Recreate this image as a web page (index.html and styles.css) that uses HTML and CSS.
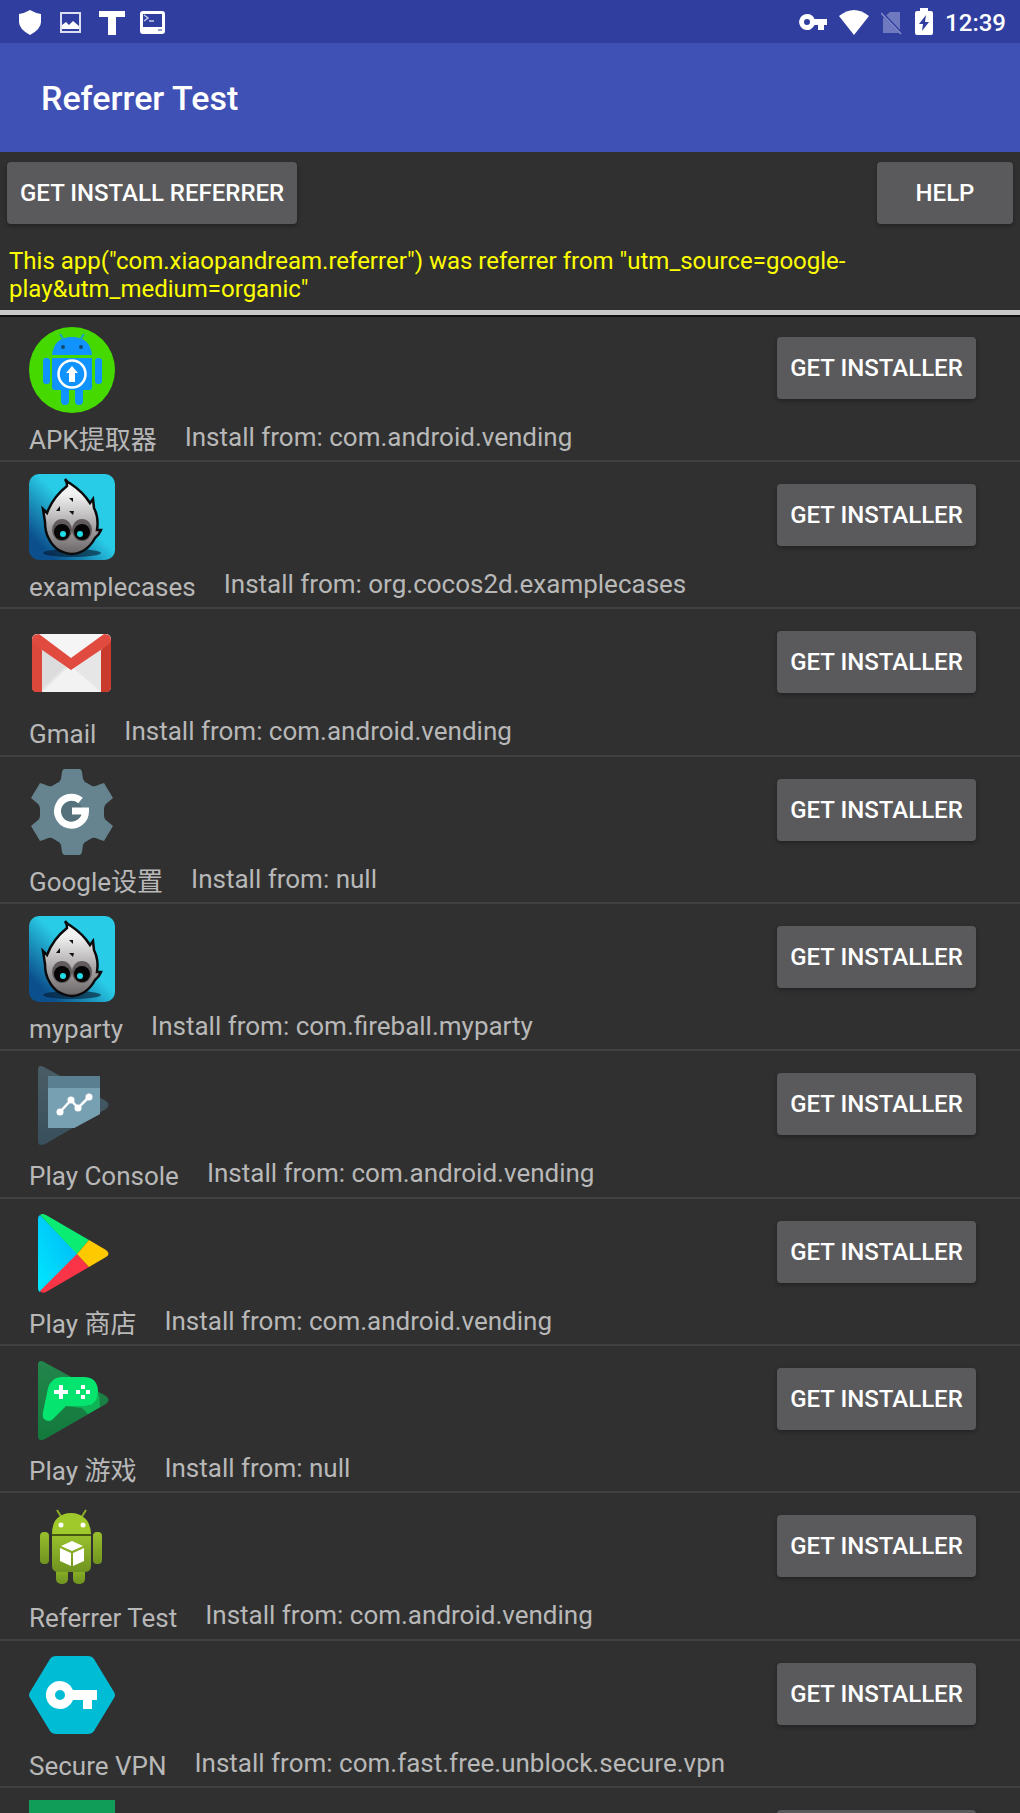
FILE: index.html
```html
<!DOCTYPE html>
<html lang="en">
<head>
<meta charset="utf-8">
<meta name="viewport" content="width=device-width, initial-scale=1">
<title>Referrer Test</title>
<link rel="stylesheet" href="styles.css">
</head>
<body>
<svg class="defs" aria-hidden="true">
  <defs>
    <linearGradient id="sky" x1="1" y1="0" x2="0" y2="1"><stop offset=".45" stop-color="#29cce6"/><stop offset=".85" stop-color="#0b4f8c"/></linearGradient>
    <linearGradient id="fur" x1="0" y1="0" x2="0" y2="1"><stop offset=".2" stop-color="#f2f2f2"/><stop offset="1" stop-color="#6a6465"/></linearGradient>
    <linearGradient id="slate" x1="0" y1="0" x2="0" y2="1"><stop offset="0" stop-color="#4a5c66"/><stop offset="1" stop-color="#38505c"/></linearGradient>
    <linearGradient id="leaf" x1="0" y1="0" x2="0" y2="1"><stop offset="0" stop-color="#23854b"/><stop offset="1" stop-color="#12793c"/></linearGradient>
    <linearGradient id="cyan" x1="1" y1="0" x2="0" y2="1"><stop offset="0" stop-color="#00b4f5"/><stop offset="1" stop-color="#00e8ff"/></linearGradient>
    <linearGradient id="droid" x1="0" y1="0" x2="0" y2="1"><stop offset="0" stop-color="#98c02c"/><stop offset="1" stop-color="#6f9320"/></linearGradient>
    <clipPath id="console-clip"><path d="M0 0H86V43L12 83H0Z"/></clipPath>
    <symbol id="cocos" viewBox="0 0 86 86">
      <rect width="86" height="86" rx="10" fill="url(#sky)"/>
      <ellipse cx="43" cy="79" rx="29" ry="4" fill="#06182b" opacity=".6"/>
      <path d="M36 5Q39 9 42 10Q54 18 61 29L64 25L65 34Q70 44 68 56L72 56Q70 61 66 64Q58 79 43 80Q27 79 20 65Q16 58 16 48L14 35L18 39Q24 23 38 12Q38 8 36 5Z" fill="url(#fur)" stroke="#0b0b0d" stroke-width="2.500"/>
      <path d="M40 24l4 0 0 4zM31 32l0 5-4 0zM40 37l5 0-1 4z" fill="#111"/>
      <ellipse cx="33" cy="56" rx="10" ry="11" fill="#3f3739" opacity=".7"/><ellipse cx="53" cy="56" rx="10" ry="11" fill="#3f3739" opacity=".7"/>
      <ellipse cx="33" cy="58" rx="8" ry="8" fill="#050505"/><ellipse cx="53" cy="58" rx="8" ry="8" fill="#050505"/>
      <circle cx="34" cy="60" r="3" fill="#1fdde8"/><circle cx="51" cy="60" r="3" fill="#1fdde8"/>
    </symbol>
  </defs>
</svg>

<header>
  <div class="status">
    <div class="status-group notices">
      <svg class="glyph" viewBox="0 0 26 26"><path d="M13 1Q18 4 24 5V13Q24 20 13 26Q2 20 2 13V5Q8 4 13 1Z" fill="#fff"/></svg>
      <svg class="glyph" viewBox="0 0 26 26"><rect x="3" y="4" width="19" height="19" fill="none" stroke="#dcdff2" stroke-width="2"/><path d="M4 20V16L8 13L11 16L15 12L21 17V20Z" fill="#fff"/></svg>
      <svg class="glyph" viewBox="0 0 26 26"><path d="M0 2H26V8H17V26H9V8H0Z" fill="#fff"/></svg>
      <svg class="glyph" viewBox="0 0 26 26"><rect x="0" y="2" width="25" height="23" rx="3" fill="#fff"/><rect x="3" y="5" width="19" height="13" fill="#303f9f"/><path d="M4 6l4 3-4 3M9 12h5" fill="none" stroke="#c5caec" stroke-width="1.500"/><path d="M18 21h4" stroke="#303f9f"/></svg>
    </div>
    <div class="status-group system">
      <svg class="key" viewBox="0 0 28 20"><path fill="#fff" fill-rule="evenodd" d="M8 2a8 8 0 0 1 7.500 5H28V13H25V18H19V13H15.500A8 8 0 1 1 8 2ZM8 7a3 3 0 1 0 0 6a3 3 0 1 0 0-6Z"/></svg>
      <svg class="wifi" viewBox="0 0 30 26"><path d="M0 7Q15-5 30 7L15 26Z" fill="#fff"/></svg>
      <svg class="sim" viewBox="0 0 22 26"><path d="M9 3H19V24H2V9Z" fill="#6e79bf"/><path d="M0 3L21 25" stroke="#303f9f" stroke-width="3"/><path d="M0 4L20 25" stroke="#8790ca" stroke-width="1.500"/></svg>
      <svg class="battery" viewBox="0 0 18 27"><path d="M5 0H13V3H16Q18 3 18 5V25Q18 27 16 27H2Q0 27 0 25V5Q0 3 2 3H5Z" fill="#fff"/><path d="M11 7L4 16H8L7 23L14 14H10Z" fill="#303f9f"/></svg>
      <time>12:39</time>
    </div>
  </div>
  <div class="appbar"><h1>Referrer Test</h1></div>
</header>

<main>
  <section class="referrer">
    <div class="actions">
      <button type="button" class="btn btn-referrer">GET INSTALL REFERRER</button>
      <button type="button" class="btn btn-help">HELP</button>
    </div>
    <p class="result">This app("com.xiaopandream.referrer") was referrer from "utm_source=google-play&amp;utm_medium=organic"</p>
  </section>

  <ul class="apps">
    <li class="app">
      <div class="info">
        <svg class="icon" viewBox="0 0 86 86"><circle cx="43" cy="43" r="43" fill="#46d900"/><g fill="#1093ff"><path d="M23 28Q25 10 43 10Q61 10 63 28Z"/><path d="M31 7l4 6M55 7l-4 6" stroke="#1aa0c8" stroke-width="2"/><path d="M23 31H63V60Q63 63 60 63H54V74Q54 78 50 78Q46 78 46 74V63H40V74Q40 78 36 78Q32 78 32 74V63H26Q23 63 23 60Z"/><rect x="14" y="31" width="7" height="26" rx="3"/><rect x="66" y="31" width="7" height="26" rx="3"/></g><circle cx="34" cy="20" r="2" fill="#124b70"/><circle cx="52" cy="20" r="2" fill="#124b70"/><circle cx="43" cy="47" r="13.500" fill="none" stroke="#fff" stroke-width="2.500"/><path d="M43 39L49 46H46V55H40V46H37Z" fill="#fff"/></svg>
        <div class="labels"><span class="name">APK提取器</span><span class="source">Install from: com.android.vending</span></div>
      </div>
      <button type="button" class="btn">GET INSTALLER</button>
    </li>
    <li class="app">
      <div class="info">
        <svg class="icon"><use href="#cocos"/></svg>
        <div class="labels"><span class="name">examplecases</span><span class="source">Install from: org.cocos2d.examplecases</span></div>
      </div>
      <button type="button" class="btn">GET INSTALLER</button>
    </li>
    <li class="app">
      <div class="info">
        <svg class="icon" viewBox="0 0 86 86"><rect x="3" y="13" width="79" height="58" rx="5" fill="#e6e6e6"/><path d="M13 71L36 49L42 45L72 71Z" fill="#f2f2f2"/><path d="M13 28L36 46L13 68Z" fill="#dcdcdc"/><path d="M8 13H77L42 38Z" fill="#f5f5f5"/><path d="M3 19V66Q3 71 8 71H13V29ZM82 19V66Q82 71 77 71H72V29Z" fill="#c93a2c"/><path d="M3 19V66Q3 71 8 71H13V29Z" fill="#d9483b"/><path d="M10 13Q3 13 3 19Q3 22 6 24L42 49L79 24Q82 22 82 19Q82 13 75 13L42 37Z" fill="#e04a3f"/></svg>
        <div class="labels"><span class="name">Gmail</span><span class="source">Install from: com.android.vending</span></div>
      </div>
      <button type="button" class="btn">GET INSTALLER</button>
    </li>
    <li class="app">
      <div class="info">
        <svg class="icon" viewBox="0 0 86 86"><path d="M35 0H51Q52 0 53 3L54 10Q55 13 58 14L63 17Q66 18 69 16L75 14L84 29L78 34Q75 36 75 39V47Q75 50 78 52L84 57L75 72L69 70Q66 68 63 69L58 72Q55 73 54 76L53 83Q52 86 51 86H35Q34 86 33 83L32 76Q31 73 28 72L23 69Q20 68 17 70L11 72L2 57L8 52Q11 50 11 47V39Q11 36 8 34L2 29L11 14L17 16Q20 18 23 17L28 14Q31 13 32 10L33 3Q34 0 35 0Z" fill="#65848f"/><circle cx="43" cy="43" r="11" fill="#54717c"/><path d="M51.500 31.500A14 14 0 1 0 56.500 42H43" fill="none" stroke="#fff" stroke-width="7"/></svg>
        <div class="labels"><span class="name">Google设置</span><span class="source">Install from: null</span></div>
      </div>
      <button type="button" class="btn">GET INSTALLER</button>
    </li>
    <li class="app">
      <div class="info">
        <svg class="icon"><use href="#cocos"/></svg>
        <div class="labels"><span class="name">myparty</span><span class="source">Install from: com.fireball.myparty</span></div>
      </div>
      <button type="button" class="btn">GET INSTALLER</button>
    </li>
    <li class="app">
      <div class="info">
        <svg class="icon" viewBox="0 0 86 86"><path d="M9 7Q9 1 15 4L77 38Q82 42 77 46L16 81Q9 84 9 78Z" fill="url(#slate)"/><g clip-path="url(#console-clip)"><rect x="19" y="13" width="52" height="52" fill="#78a0b3"/><rect x="19" y="13" width="52" height="12" fill="#5a7f90"/></g><path d="M31 49L42 37L49 45L60 34" fill="none" stroke="#fff" stroke-width="2.500"/><g fill="#fff"><circle cx="31" cy="49" r="3.500"/><circle cx="42" cy="37" r="3.500"/><circle cx="49" cy="45" r="3.500"/><circle cx="60" cy="34" r="3.500"/></g></svg>
        <div class="labels"><span class="name">Play Console</span><span class="source">Install from: com.android.vending</span></div>
      </div>
      <button type="button" class="btn">GET INSTALLER</button>
    </li>
    <li class="app">
      <div class="info">
        <svg class="icon" viewBox="0 0 86 86"><path d="M11 4Q9 5 9 8V77Q9 80 11 81L49 43Z" fill="url(#cyan)"/><path d="M11 4Q13 2 17 4L60 29L48 43Z" fill="#0bec72"/><path d="M11 80Q13 83 17 81L60 56L48 43Z" fill="#fb3448"/><path d="M60 29L77 39Q82 43 77 46L60 56L48 43Z" fill="#ffc900"/></svg>
        <div class="labels"><span class="name">Play 商店</span><span class="source">Install from: com.android.vending</span></div>
      </div>
      <button type="button" class="btn">GET INSTALLER</button>
    </li>
    <li class="app">
      <div class="info">
        <svg class="icon" viewBox="0 0 86 86"><path d="M9 7Q9 1 15 4L77 38Q82 42 77 46L16 81Q9 84 9 78Z" fill="url(#leaf)"/><path d="M36 48H60L70 36L71 49L59 56L53 50Z" fill="#0fb457"/><path d="M32 19H56Q69 20 69 34Q68 48 55 48H37L24 61Q20 65 15 61Q13 59 14 54L19 30Q22 20 32 19Z" fill="#05e46e"/><path d="M30 27H34V32H39V36H34V41H30V36H25V32H30ZM52 27h4v4h-4zM52 37h4v4h-4zM47 32h4v4h-4zM57 32h4v4h-4z" fill="#fff"/></svg>
        <div class="labels"><span class="name">Play 游戏</span><span class="source">Install from: null</span></div>
      </div>
      <button type="button" class="btn">GET INSTALLER</button>
    </li>
    <li class="app">
      <div class="info">
        <svg class="icon" viewBox="0 0 86 86"><path d="M28 5l5 8M57 5l-5 8" stroke="#8cae2a" stroke-width="2"/><g fill="url(#droid)"><rect x="11" y="27" width="9" height="32" rx="4"/><rect x="64" y="27" width="9" height="32" rx="4"/><rect x="27" y="58" width="12" height="21" rx="5"/><rect x="44" y="58" width="12" height="21" rx="5"/><path d="M23 31H62V61Q62 67 55 67H30Q23 67 23 61Z"/></g><path d="M23 29Q23 9 42 8Q61 9 62 29Z" fill="#a0ca2c"/><path d="M23 30H62" stroke="#44590f" stroke-width="2"/><circle cx="32" cy="20" r="2.500" fill="#fff"/><circle cx="54" cy="20" r="2.500" fill="#fff"/><path d="M43 36L54 41L43 46L32 41ZM31 43L42 48V61L31 56ZM55 43L44 48V61L55 56Z" fill="#fff"/></svg>
        <div class="labels"><span class="name">Referrer Test</span><span class="source">Install from: com.android.vending</span></div>
      </div>
      <button type="button" class="btn">GET INSTALLER</button>
    </li>
    <li class="app">
      <div class="info">
        <svg class="icon" viewBox="0 0 86 86"><path d="M27 3H59Q63 3 65 6L85 39Q87 42 85 45L65 78Q63 81 59 81H27Q23 81 21 78L1 45Q-1 42 1 39L21 6Q23 3 27 3Z" fill="#00bcd4"/><path fill="#fff" fill-rule="evenodd" d="M31 28a14 14 0 0 1 13 9H68V47H63V56H54V47H44A14 14 0 1 1 31 28ZM31 37a5 5 0 1 0 0 10a5 5 0 1 0 0-10Z"/></svg>
        <div class="labels"><span class="name">Secure VPN</span><span class="source">Install from: com.fast.free.unblock.secure.vpn</span></div>
      </div>
      <button type="button" class="btn">GET INSTALLER</button>
    </li>
    <li class="app">
      <div class="info">
        <svg class="icon" viewBox="0 0 86 86"><rect width="86" height="86" fill="#0f9d58"/></svg>
      </div>
      <button type="button" class="btn" aria-label="Get installer"></button>
    </li>
  </ul>
</main>
</body>
</html>
```
FILE: styles.css
```css
* { box-sizing: border-box; }

body {
  margin: 0;
  height: 100vh;
  display: flex;
  flex-direction: column;
  overflow: hidden;
  background: #303030;
  color: #b8b8b8;
  font-family: Roboto, "Noto Sans CJK SC", sans-serif;
}

.defs { position: absolute; width: 0; height: 0; }
svg { display: block; flex: none; }

.status {
  height: 43px;
  padding: 0 14px 0 17px;
  display: flex;
  justify-content: space-between;
  align-items: center;
  background: #303f9f;
  color: #fff;
}
.status-group { display: flex; align-items: center; }
.notices { gap: 15px; }
.system { gap: 12px; }
.glyph { width: 26px; height: 26px; }
.key { width: 28px; height: 20px; }
.wifi { width: 30px; height: 26px; }
.sim { width: 22px; height: 26px; }
.battery { width: 18px; height: 27px; }
.status time {
  padding-top: 2px;
  font-size: 24px;
  font-weight: 500;
  line-height: 28px;
}

.appbar {
  height: 109px;
  padding: 0 41px;
  display: flex;
  align-items: center;
  background: #3f51b5;
}
.appbar h1 {
  margin: 0;
  color: #fff;
  font-size: 34px;
  font-weight: 500;
  line-height: 40px;
}

main {
  flex: 1;
  min-height: 0;
  display: flex;
  flex-direction: column;
}

.btn {
  flex: none;
  min-width: 199px;
  height: 62px;
  padding: 0 13px;
  border: 0;
  border-radius: 4px;
  background: #5a5a5c;
  box-shadow: 0 2px 4px rgba(0, 0, 0, .3);
  color: #fff;
  font: 500 24px/28px Roboto, sans-serif;
}

.referrer {
  border-bottom: 5px solid #c8c8c8;
  box-shadow: 0 2px 0 #111;
}
.actions {
  padding: 10px 7px 0;
  display: flex;
  justify-content: space-between;
}
.btn-help { min-width: 136px; }
.result {
  margin: 0;
  padding: 23px 170px 7px 9px;
  color: #ff0;
  font-size: 24px;
  line-height: 28px;
}

.apps {
  flex: 1;
  min-height: 0;
  margin: 0;
  padding: 0;
  list-style: none;
  overflow-y: auto;
  scrollbar-width: none;
}
.app {
  height: 147px;
  padding: 12px 44px 0 29px;
  display: flex;
  justify-content: space-between;
  align-items: flex-start;
  border-bottom: 2px solid #414141;
}
.app:nth-child(3n) { height: 148px; }
.app .btn { margin-top: 10px; }
.icon { width: 86px; height: 86px; }
.labels {
  padding-top: 8px;
  display: flex;
  gap: 28px;
  align-items: flex-start;
  font-size: 26px;
  line-height: 32px;
  white-space: nowrap;
}
.name { padding-top: 3px; }
```
